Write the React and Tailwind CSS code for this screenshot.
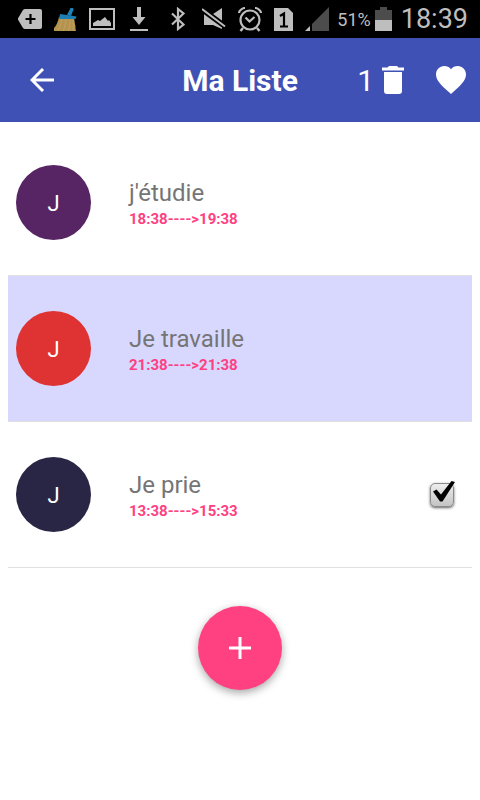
import { useState } from 'react';
import clsx from 'clsx';

const initialItems = [
  { id: 1, title: "j'étudie", from: '18:38', to: '19:38', color: 'bg-[#572563]', selected: false, checked: false },
  { id: 2, title: 'Je travaille', from: '21:38', to: '21:38', color: 'bg-[#df3232]', selected: true, checked: false },
  { id: 3, title: 'Je prie', from: '13:38', to: '15:33', color: 'bg-[#292645]', selected: false, checked: true },
];

const TagIcon = () => (
  <svg width="24" height="20" viewBox="0 0 24 20">
    <path d="M7 0h15a2 2 0 0 1 2 2v16a2 2 0 0 1-2 2H7a3 3 0 0 1-2-1L.5 11.5a2.500 2.500 0 0 1 0-3L5 1a3 3 0 0 1 2-1z" fill="#bebebe" />
    <path d="M12.500 5v10M7.500 10h10" stroke="#000" strokeWidth="2.200" />
  </svg>
);

const BroomIcon = () => (
  <svg width="23" height="25" viewBox="0 0 23 25">
    <path d="M5 10C4 15 2 19 0 21v3h22c-1-3 0-4-1-7l-1-6z" fill="#b4924f" />
    <path d="M8 12c-1 4-2 8-4 11M12 12c0 4-1 8-3 12M16 13c0 4 0 8-2 11M19 13c0 4 1 8 0 10" stroke="#c8a662" strokeWidth=".8" fill="none" />
    <path d="M6 7l16.500 2.500-1 2.500H5z" fill="#1b7fb3" />
    <path d="M13 8l3.500-7 2.500 0 .5 1.500L17 9z" fill="#1b85bb" />
  </svg>
);

const PictureIcon = () => (
  <svg width="26" height="22" viewBox="0 0 26 22">
    <path d="M1 1h24v20H1z" fill="none" stroke="#bebebe" strokeWidth="2" />
    <path d="M4 18v-3l5-3 2 1 5-4 3 4 1-1 2 3v3z" fill="#bebebe" />
  </svg>
);

const DownloadIcon = () => (
  <svg width="18" height="24" viewBox="0 0 18 24" fill="#bebebe">
    <path d="M7 0h4v10h4.500L9 18 2.500 10H7zM0 22h18v2H0z" />
  </svg>
);

const BluetoothIcon = () => (
  <svg width="14" height="24" viewBox="0 0 14 24" fill="none" stroke="#bebebe" strokeWidth="2.200">
    <path d="M1 6.500l11.500 11L7 22V2l5.500 4.500L1 17.500" />
  </svg>
);

const MuteIcon = () => (
  <svg width="24" height="22" viewBox="0 0 24 22">
    <path d="M2 6h9l9-6v21l-9-4H2z" fill="#bebebe" />
    <path d="M-1 .5l25 18.500" stroke="#000" strokeWidth="5.500" />
    <path d="M0 1l23 17.500" stroke="#bebebe" strokeWidth="2" />
  </svg>
);

const AlarmIcon = () => (
  <svg width="24" height="25" viewBox="0 0 24 25" fill="none" stroke="#bebebe" strokeWidth="2.200">
    <circle cx="12" cy="13" r="9.500" />
    <path d="M7.500 10.500l4 4 5-4.500" />
    <path d="M1 6c0-2 3-5 6-5M23 6c0-2-3-5-6-5" />
    <path d="M5 21l-2.500 3M19 21l2.500 3" strokeWidth="2.500" />
  </svg>
);

const SimIcon = () => (
  <svg width="19" height="23" viewBox="0 0 19 23">
    <path d="M0 0h14l5 5v18H0z" fill="#bebebe" />
    <path d="M6 8l4-2.500V18M6 18.500h8" fill="none" stroke="#000" strokeWidth="2.200" />
  </svg>
);

const SignalIcon = () => (
  <svg width="24" height="24" viewBox="0 0 24 24">
    <path d="M24 0v24H7V17z" fill="#4c4c4c" />
    <path d="M5 19v5H0z" fill="#bebebe" />
  </svg>
);

const BatteryIcon = () => (
  <svg width="17" height="24" viewBox="0 0 17 24">
    <path d="M5 0h7v3h5v10H0V3h5z" fill="#4c4c4c" />
    <path d="M0 13h17v11H0z" fill="#bebebe" />
  </svg>
);

const StatusBar = () => (
  <div className="flex h-[38px] items-center justify-between bg-black pl-[18px] pr-3 text-[#bebebe]">
    <div className="flex items-center gap-3">
      <TagIcon />
      <BroomIcon />
      <PictureIcon />
      <span className="pl-[3px]"><DownloadIcon /></span>
    </div>
    <div className="flex items-center">
      <div className="flex items-center gap-3">
        <span className="pr-[5px]"><BluetoothIcon /></span>
        <MuteIcon />
        <AlarmIcon />
        <SimIcon />
        <SignalIcon />
      </div>
      <span className="ml-2 pt-0.5 text-lg">51%</span>
      <span className="ml-1"><BatteryIcon /></span>
      <span className="ml-[9px] pt-px text-[27px] leading-none">18:39</span>
    </div>
  </div>
);

const Header = ({ count }) => (
  <header className="grid h-[84px] grid-cols-[1fr_auto_1fr] items-center bg-[#3f51b5] px-3 text-white">
    <button aria-label="Retour" className="flex w-[60px] justify-center">
      <svg width="24" height="24" viewBox="0 0 24 24" fill="none" stroke="currentColor" strokeWidth="3">
        <path d="M24 12H2M13 1L2 12l11 11" />
      </svg>
    </button>
    <h1 className="pt-0.5 text-3xl font-bold">Ma Liste</h1>
    <div className="flex items-center justify-end gap-8 pr-0.5">
      <button aria-label="Supprimer" className="flex items-center gap-2">
        <span className="pt-0.5 text-3xl">{count}</span>
        <svg width="22" height="28" viewBox="0 0 22 28" fill="currentColor">
          <path d="M7 0h8l1.500 1.500H22v3H0v-3h5.500zM2 6h18v19a3 3 0 0 1-3 3H5a3 3 0 0 1-3-3z" />
        </svg>
      </button>
      <button aria-label="Favoris">
        <svg width="30" height="28" viewBox="2 3 20 18.350" preserveAspectRatio="none" fill="currentColor">
          <path d="M12 21.350l-1.450-1.320C5.400 15.360 2 12.280 2 8.500 2 5.420 4.420 3 7.500 3c1.740 0 3.410.81 4.500 2.090C13.090 3.810 14.760 3 16.500 3 19.580 3 22 5.420 22 8.500c0 3.780-3.400 6.860-8.550 11.540L12 21.350z" />
        </svg>
      </button>
    </div>
  </header>
);

const CheckBox = ({ label, checked, onChange }) => (
  <label className="relative block size-7">
    <input
      type="checkbox"
      aria-label={label}
      checked={checked}
      onChange={onChange}
      className="absolute bottom-0.5 left-0.5 size-6 appearance-none rounded-[5px] border border-[#8a8a8a] bg-linear-to-b from-[#ededed] to-[#c4c4c4] shadow-sm shadow-black/50"
    />
    {checked && (
      <svg width="28" height="28" viewBox="0 0 28 28" className="pointer-events-none absolute inset-0">
        <path d="M5 10.500l3.500-2 4.500 5L23.500 0l3.500 1-12.500 19.500h-2.500z" fill="#000" />
      </svg>
    )}
  </label>
);

const ListItem = ({ item, onToggle }) => (
  <li
    className={clsx(
      'flex h-[146px] items-center border-b border-[#e0e0e0] pl-2 pr-4',
      item.selected && 'bg-[#d8d8ff]'
    )}
  >
    <div className={clsx('flex size-[75px] shrink-0 items-center justify-center rounded-full pt-0.5 text-[22px] text-white', item.color)}>
      {item.title[0].toUpperCase()}
    </div>
    <div className="ml-[38px] flex-1 pt-1">
      <p className="text-2xl leading-7 text-[#757575]">{item.title}</p>
      <p className="text-[15px] leading-6 font-bold text-[#ff4081]">{`${item.from}---->${item.to}`}</p>
    </div>
    {item.checked && <CheckBox label={item.title} checked onChange={() => onToggle(item.id)} />}
  </li>
);

export default function App() {
  const [items, setItems] = useState(initialItems);

  const toggle = (id) => {
    setItems(items.map(item => (item.id === id ? { ...item, checked: !item.checked } : item)));
  };

  return (
    <div className="min-h-screen bg-white font-['Roboto',sans-serif]">
      <StatusBar />
      <Header count={items.filter(item => item.selected).length} />
      <main className="p-2">
        <ul>
          {items.map(item => (
            <ListItem key={item.id} item={item} onToggle={toggle} />
          ))}
        </ul>
        <div className="flex justify-center pt-[38px]">
          <button
            aria-label="Ajouter"
            className="flex size-[84px] items-center justify-center rounded-full bg-[#ff4081] shadow-[0_3px_8px_rgba(0,0,0,0.35)]"
          >
            <svg width="22" height="22" viewBox="0 0 22 22" stroke="#fff" strokeWidth="3">
              <path d="M11 0v22M0 11h22" />
            </svg>
          </button>
        </div>
      </main>
    </div>
  );
}
